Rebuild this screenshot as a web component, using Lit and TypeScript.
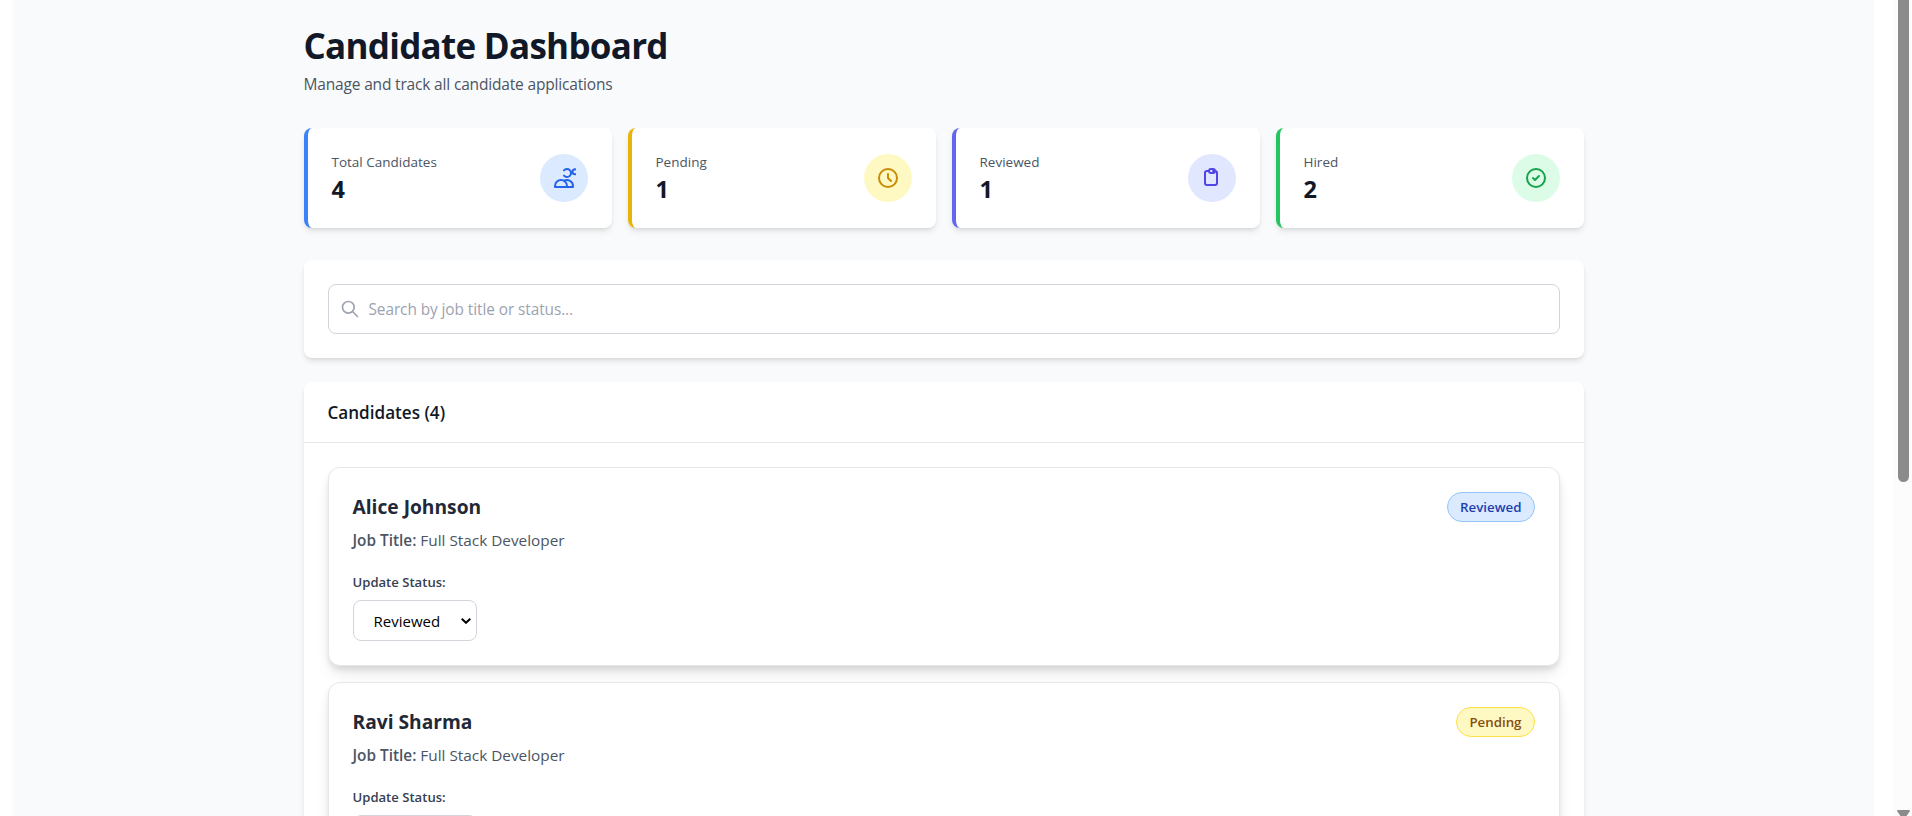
import { LitElement, html, css, svg } from "lit";
import { customElement, property } from "lit/decorators.js";

const icons: Record<string, unknown> = {
  users: svg`<path d="M12 4.354a4 4 0 110 5.292M15 21H3v-1a6 6 0 0112 0v1zm0 0h6v-1a6 6 0 00-9-5.197m13.5-9a2.5 2.5 0 11-5 0 2.5 2.5 0 015 0z"/>`,
  clock: svg`<path d="M12 8v4l3 3m6-3a9 9 0 11-18 0 9 9 0 0118 0z"/>`,
  clipboard: svg`<path d="M9 5H7a2 2 0 00-2 2v10a2 2 0 002 2h8a2 2 0 002-2V7a2 2 0 00-2-2h-2M9 5a2 2 0 002 2h2a2 2 0 002-2M9 5a2 2 0 012-2h2a2 2 0 012 2"/>`,
  check: svg`<path d="M9 12l2 2 4-4m6 2a9 9 0 11-18 0 9 9 0 0118 0z"/>`,
  search: svg`<path d="M21 21l-6-6m2-5a7 7 0 11-14 0 7 7 0 0114 0z"/>`,
};

const icon = (name: string) => html`<svg viewBox="0 0 24 24" fill="none" stroke="currentColor"
  stroke-width="2" stroke-linecap="round" stroke-linejoin="round">${icons[name]}</svg>`;

@customElement("stat-card")
class StatCard extends LitElement {
  @property() label = "";
  @property() value = "";
  @property() icon = "";
  @property() tone = "";
  static styles = css`
    :host { display: block; }
    .card { box-sizing: border-box; height: 100px; padding: 24px; display: flex; align-items: center;
      justify-content: space-between; background: #fff; border-radius: 8px; border-left: 4px solid;
      box-shadow: 0 4px 6px -1px rgba(0,0,0,.1), 0 2px 4px -2px rgba(0,0,0,.1); }
    .blue { border-color: #3b82f6; } .yellow { border-color: #eab308; }
    .indigo { border-color: #6366f1; } .green { border-color: #22c55e; }
    .text { align-self: flex-start; }
    .label { font-size: 13.5px; line-height: 20px; font-weight: 500; color: #4b5563; }
    .value { font-size: 23.500px; line-height: 34px; font-weight: 700; color: #111827; }
    .disc { width: 24px; height: 24px; padding: 12px; border-radius: 50%; }
    .blue .disc { background: #dbeafe; color: #2563eb; }
    .yellow .disc { background: #fef9c3; color: #ca8a04; }
    .indigo .disc { background: #e0e7ff; color: #4f46e5; }
    .green .disc { background: #dcfce7; color: #16a34a; }
    svg { display: block; width: 24px; height: 24px; overflow: hidden; }
  `;
  render() {
    return html`<div class="card ${this.tone}">
      <div class="text"><div class="label">${this.label}</div><div class="value">${this.value}</div></div>
      <div class="disc">${icon(this.icon)}</div>
    </div>`;
  }
}

@customElement("candidate-card")
class CandidateCard extends LitElement {
  @property() name = "";
  @property() job = "";
  @property() status = "";
  static styles = css`
    :host { display: block; }
    .card { box-sizing: border-box; height: 199px; padding: 24px; display: flex; align-items: flex-start;
      justify-content: space-between; background: #fff; border: 1px solid #e5e7eb; border-radius: 12px;
      box-shadow: 0 4px 6px -1px rgba(0,0,0,.1), 0 10px 15px -3px rgba(0,0,0,.1); }
    .name { font-size: 19.2px; line-height: 30px; font-weight: 700; color: #1f2937; }
    .job { margin-top: 6px; font-size: 15.35px; line-height: 24px; color: #4b5563; }
    .job b { font-weight: 600; }
    .label { margin-top: 20px; font-size: 13.1px; line-height: 20px; font-weight: 600; color: #374151; }
    .select { box-sizing: border-box; margin-top: 8px; width: 124px; height: 41px; padding: 0 5px 0 20px;
      display: flex; align-items: center; justify-content: space-between; border: 1px solid #d1d5db;
      border-radius: 8px; font-size: 15px; color: #000; }
    .select svg { width: 10px; height: 6px; display: block; }
    .badge { padding: 4px 12px; border: 1px solid; border-radius: 15px; font-size: 13.3px; line-height: 20px; font-weight: 600; }
    .Reviewed { background: #dbeafe; color: #1e40af; border-color: #93c5fd; }
    .Pending { background: #fef9c3; color: #854d0e; border-color: #fde047; }
    .Hired { background: #dcfce7; color: #166534; border-color: #86efac; }
  `;
  render() {
    return html`<div class="card">
      <div>
        <div class="name">${this.name}</div>
        <div class="job"><b>Job Title:</b> ${this.job}</div>
        <div class="label">Update Status:</div>
        <div class="select"><span>${this.status}</span>
          <svg viewBox="0 0 10 6" fill="none" stroke="#000" stroke-width="2"><path d="M.7 .7L5 4.8 9.3 .7"/></svg></div>
      </div>
      <div class="badge ${this.status}">${this.status}</div>
    </div>`;
  }
}

@customElement("app-root")
class AppRoot extends LitElement {
  static styles = css`
    :host { display: flex; height: 816px; overflow: hidden; padding-left: 13px; background: #fff;
      font-family: "Open Sans", "Noto Sans", sans-serif; }
    main { flex: 1; margin-right: 20px; padding: 24px 290.5px 0; background: #f9fafb; }
    h1 { margin: 0; font-size: 35px; line-height: 44px; letter-spacing: -.72px; font-weight: 700; color: #111827; white-space: nowrap; }
    .sub { margin: 4px 0 32px; font-size: 15.5px; line-height: 24px; letter-spacing: -.17px; color: #4b5563; }
    .stats { display: grid; grid-template-columns: repeat(4, 1fr); gap: 16px; }
    .panel { background: #fff; border-radius: 8px;
      box-shadow: 0 4px 6px -1px rgba(0,0,0,.1), 0 2px 4px -2px rgba(0,0,0,.1); }
    .search { margin: 32px 0 24px; padding: 24px; }
    .field { box-sizing: border-box; height: 50px; padding: 0 11px; display: flex; align-items: center; gap: 9px;
      border: 1px solid #d1d5db; border-radius: 8px; color: #9ca3af; font-size: 15.4px; letter-spacing: -.08px; }
    .field svg { width: 20px; height: 20px; display: block; }
    h2 { margin: 0; padding: 17px 24px 15px; font-size: 17.1px; line-height: 28px; font-weight: 600; color: #111827;
      border-bottom: 1px solid #e5e7eb; }
    .list { padding: 24px; display: grid; gap: 16px; }
    .scroll { width: 18px; height: 816px; background: #fcfcfc; display: flex; flex-direction: column;
      align-items: center; justify-content: space-between; }
    .thumb { width: 11px; height: 482px; margin-right: -1px; background: #8b8b8b; border-radius: 0 0 6px 6px; }
    .scroll svg { display: block; width: 13px; height: 6px; }
  `;
  render() {
    return html`
      <main>
        <h1>Candidate Dashboard</h1>
        <p class="sub">Manage and track all candidate applications</p>
        <div class="stats">
          <stat-card label="Total Candidates" value="4" icon="users" tone="blue"></stat-card>
          <stat-card label="Pending" value="1" icon="clock" tone="yellow"></stat-card>
          <stat-card label="Reviewed" value="1" icon="clipboard" tone="indigo"></stat-card>
          <stat-card label="Hired" value="2" icon="check" tone="green"></stat-card>
        </div>
        <div class="panel search"><div class="field">${icon("search")}<span>Search by job title or status...</span></div></div>
        <section class="panel">
          <h2>Candidates (4)</h2>
          <div class="list">
            <candidate-card name="Alice Johnson" job="Full Stack Developer" status="Reviewed"></candidate-card>
            <candidate-card name="Ravi Sharma" job="Full Stack Developer" status="Pending"></candidate-card>
          </div>
        </section>
      </main>
      <div class="scroll"><div class="thumb"></div>
        <svg viewBox="0 0 13 6"><path d="M1 0H12Q13.500 .5 12.500 1.800L9.500 6H3.500L.5 1.800Q-.5 .5 1 0Z" fill="#8b8b8b"/></svg></div>`;
  }
}
